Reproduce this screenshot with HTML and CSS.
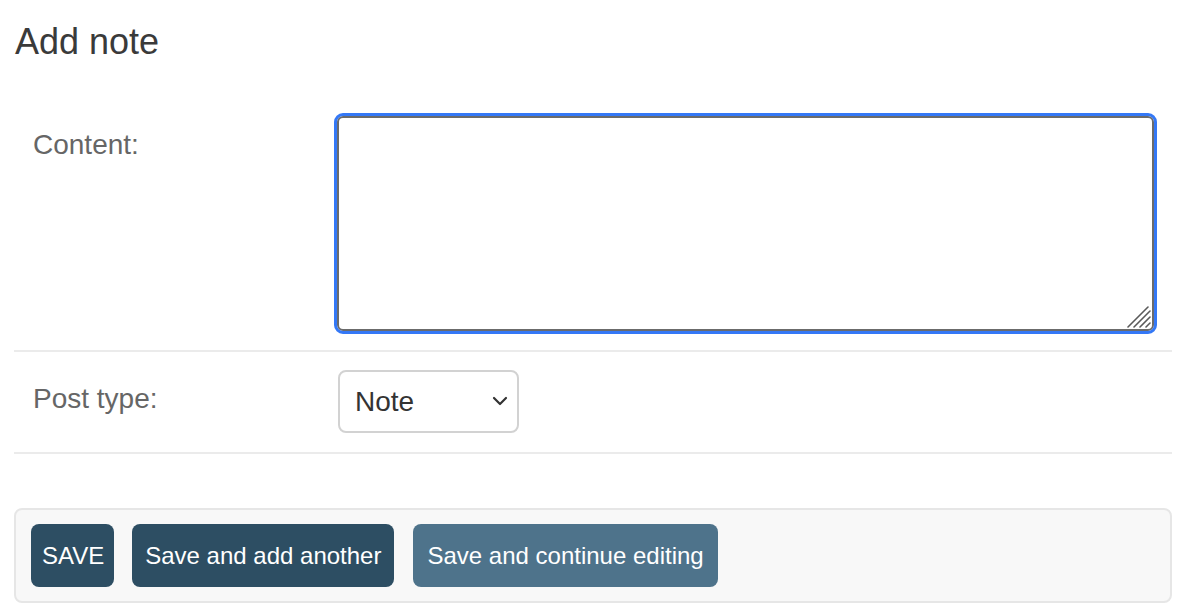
FILE: index.html
```html
<!DOCTYPE html>
<html lang="en">
<head>
<meta charset="utf-8">
<title>Add note</title>
<link rel="stylesheet" href="styles.css">
</head>
<body>
<div class="page">
  <h1 class="title">Add note</h1>
  <form class="form">
    <div class="form-row">
      <label class="label" for="id_content">Content:</label>
      <div class="field">
        <div class="textarea-wrap">
          <textarea id="id_content" class="textarea is-focused"></textarea>
          <svg class="grip" width="24" height="22" viewBox="0 0 24 22" aria-hidden="true">
            <g stroke="#5a5a5a" stroke-width="1.6" stroke-linecap="round">
              <path d="M1 21 L21 1"/>
              <path d="M7 21 L23 5"/>
              <path d="M13 21 L23 11"/>
              <path d="M19 21 L23 17"/>
            </g>
          </svg>
        </div>
      </div>
    </div>
    <div class="form-row">
      <label class="label" for="id_type">Post type:</label>
      <div class="field">
        <div class="select-wrap">
          <select id="id_type" class="select">
            <option>Note</option>
          </select>
          <svg class="chevron" width="16" height="10" viewBox="0 0 16 10" aria-hidden="true">
            <path d="M2 2 L8 8 L14 2" fill="none" stroke="#333" stroke-width="2.2" stroke-linecap="round" stroke-linejoin="round"/>
          </svg>
        </div>
      </div>
    </div>
    <div class="submit-row">
      <button type="button" class="btn btn-dark btn-caps">SAVE</button>
      <button type="button" class="btn btn-dark">Save and add another</button>
      <button type="button" class="btn btn-light">Save and continue editing</button>
    </div>
  </form>
</div>
</body>
</html>
```

FILE: styles.css
```css
html, body {
  margin: 0;
  padding: 0;
  background: #ffffff;
}

body {
  font-family: "Liberation Sans", Arial, Helvetica, sans-serif;
  color: #333333;
}

.page {
  margin-left: 14px;
  width: 1158px;
}

.title {
  margin: 0;
  padding: 21px 0 0 1px;
  font-size: 36px;
  font-weight: 400;
  line-height: 41px;
  color: #3a3a3a;
}

.form {
  margin-top: 34px;
}

.form-row {
  display: grid;
  grid-template-columns: 304px 1fr;
  padding: 20px 18px 19px 19px;
  border-bottom: 2px solid #ebebeb;
}

.form-row + .form-row {
  padding-top: 18px;
}

.label {
  padding-top: 13px;
  font-size: 28px;
  line-height: 32px;
  color: #666666;
}

.field {
  display: flex;
  align-items: flex-start;
}

.textarea-wrap {
  position: relative;
  display: flex;
}

.textarea {
  box-sizing: border-box;
  width: 817px;
  height: 215px;
  margin: 0;
  border: 2px solid #6b6b6b;
  border-radius: 6px;
  background: #ffffff;
  font-family: inherit;
  font-size: 26px;
  resize: none;
}

.textarea.is-focused {
  outline: 3px solid #3478f6;
  outline-offset: 0;
}

.grip {
  position: absolute;
  right: 3px;
  bottom: 3px;
  pointer-events: none;
}

.select-wrap {
  position: relative;
  box-sizing: border-box;
  width: 181px;
  height: 63px;
  margin-left: 1px;
  border: 2px solid #d2d2d2;
  border-radius: 8px;
  background: #ffffff;
}

.select {
  -webkit-appearance: none;
  appearance: none;
  box-sizing: border-box;
  width: 100%;
  height: 100%;
  margin: 0;
  padding: 0 0 0 15px;
  border: none;
  background: transparent;
  font-family: inherit;
  font-size: 28px;
  color: #333333;
  outline: none;
}

.chevron {
  position: absolute;
  right: 9px;
  top: 24px;
  pointer-events: none;
}

.submit-row {
  display: flex;
  gap: 18px;
  margin-top: 54px;
  padding: 14px 15px;
  border: 2px solid #e6e6e6;
  border-radius: 8px;
  background: #f8f8f8;
}

.btn {
  height: 63px;
  padding: 0 13px;
  border: none;
  border-radius: 8px;
  font-family: inherit;
  font-size: 24px;
  color: #ffffff;
  cursor: pointer;
}

.btn-caps {
  padding: 0 10px 0 11px;
}

.btn-dark {
  background: #2d4e63;
}

.btn-light {
  margin-left: 1px;
  padding: 0 14px;
  background: #4e738b;
}
```
